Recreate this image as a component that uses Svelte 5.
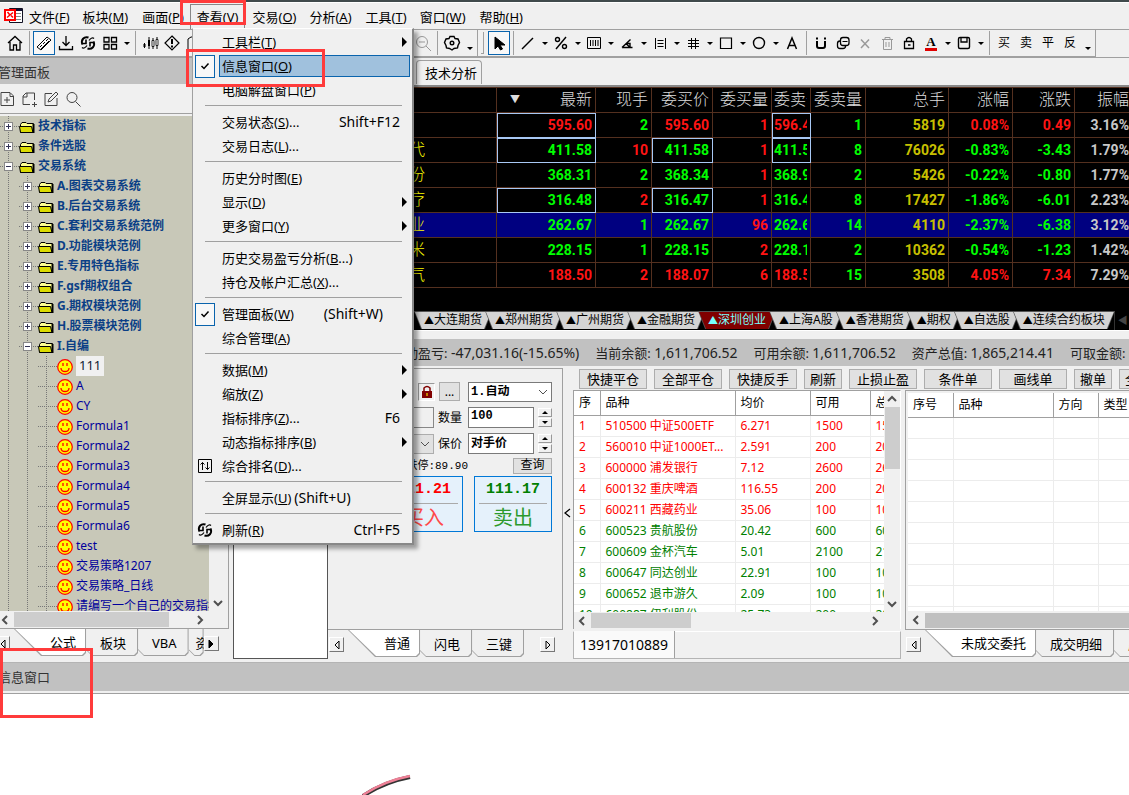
<script>
    const menus = [
        ['文件', 'F'], ['板块', 'M'], ['画面', 'P'], ['查看', 'V'], ['交易', 'O'],
        ['分析', 'A'], ['工具', 'T'], ['窗口', 'W'], ['帮助', 'H'],
    ];

    const viewMenu = [
        { text: '工具栏', key: 'T', sub: true },
        { text: '信息窗口', key: 'O', checked: true, active: true },
        { text: '电脑解盘窗口', key: 'P' },
        null,
        { text: '交易状态', key: 'S', tail: '...', hint: 'Shift+F12' },
        { text: '交易日志', key: 'L', tail: '...' },
        null,
        { text: '历史分时图', key: 'E' },
        { text: '显示', key: 'D', sub: true },
        { text: '更多窗口', key: 'Y', sub: true },
        null,
        { text: '历史交易盈亏分析', key: 'B', inner: '...' },
        { text: '持仓及帐户汇总', key: 'X', tail: '...' },
        null,
        { text: '管理面板', key: 'W', checked: true, hint: '(Shift+W)', near: true },
        { text: '综合管理', key: 'A' },
        null,
        { text: '数据', key: 'M', sub: true },
        { text: '缩放', key: 'Z', sub: true },
        { text: '指标排序', key: 'Z', tail: '...', hint: 'F6' },
        { text: '动态指标排序', key: 'B', sub: true },
        { text: '综合排名', key: 'D', tail: '...', icon: 'sort' },
        null,
        { text: '全屏显示', key: 'U', extra: '(Shift+U)' },
        null,
        { text: '刷新', key: 'R', hint: 'Ctrl+F5', icon: 'refresh' },
    ];

    // 18x18 icons
    const icons = {
        home: '<path d="M2 9 9 2.500 16 9M4 8v8h3.500v-5h3v5H14V8" stroke-width="1.300"/>',
        ruler: '<path d="M2 13 12 3l4 3L6 16zM5 13l2-2M8 10l2-2M11 7l2-2M6 15l8-8"/>',
        download: '<path d="M9 2v9M5.500 8 9 11.500 12.500 8M2.500 12v3.500h13V12" stroke-width="1.300"/>',
        refresh: '<path d="M9.500 3.500C5 2 1.500 6 3.500 10.500M8.500 14.500c4.500 1.500 8-2.500 6-7" stroke-width="2"/><path d="M7 5.500v4H3M11 12.500v-4h4" stroke-width="1.600"/><path d="M10 6.500c2-3 4-3 5-2M8 11.500c-2 3-4 3-5 2" stroke-width="1.300"/>',
        grid: '<path d="M3 3.500h5v4.500H3zM10.500 3.500h5v4.500h-5zM3 10.500h5V15H3zM10.500 10.500h5V15h-5z" stroke-width="1.300"/>',
        candle: '<path d="M3.500 9v5M8 3v12M12 4v11M16 3v12"/><path d="M2.500 10h2v3h-2zM7 6h2v6H7z" fill="currentColor" stroke="none"/><path d="M11 6.500h2v6h-2zM15 5.500h2v6h-2z" fill="#fff" stroke-width=".8"/>',
        alert: '<path d="M9 2 16 9 9 16 2 9z" stroke-width="1.200"/><path d="M9 5v5M9 11.500v2" stroke-width="2"/>',
        page: '<path d="M3 5l3-2h8v13H3z"/>',
        zoomout: '<circle cx="8" cy="8" r="5.500"/><path d="M5 8h6M12 12l5 5"/>',
        gear: '<path d="M7 2.500h4l1 2 3 .5 1.500 3.500-1.500 3-.5 2.500-3.500.500-2 1.500-2.500-1.500-3-.5-.5-2.500L1.500 8.500 3 5l3-.5z" stroke-width="1.400"/><circle cx="9" cy="9" r="1.800" stroke-width="1.400"/>',
        cursor: '<path d="M5 3v12l3-3 2.500 4 2-1-2.500-4h5z" fill="currentColor"/>',
        line: '<path d="M3 15 14 4" stroke-width="1.500"/>',
        percent: '<path d="M4 15 14 3" stroke-width="1.400"/><circle cx="5.500" cy="5.500" r="2" stroke-width="1.400"/><circle cx="12.500" cy="12.500" r="2" stroke-width="1.400"/>',
        bars: '<path d="M2.500 3.500h13v11h-13zM5.500 6v6M8 6v6M10.500 6v6M13 6v6"/>',
        angle: '<path d="M4 13.500h10.500M4 13.500 12.500 5.500M8 9.500l4 4M9 9.500h3v4" stroke-width="1.400"/>',
        lines: '<path d="M4.500 4v11M14.500 4v11M6.500 6.500h6M6.500 9.500h6M6.500 12.500h6"/>',
        hash: '<path d="M7.500 4v11M11.500 4v11M4 6.500h11M4 9.500h11M4 12.500h11"/>',
        square: '<path d="M3.500 4h11v10.500h-11z" stroke-width="1.200"/>',
        circle: '<circle cx="9" cy="9" r="5.500" stroke-width="1.400"/>',
        letter: '<path d="M4.500 15 9 4l4.500 11M6 11.500h6" stroke-width="1.500"/>',
        magnet: '<path d="M5 7v5q0 2 2 2h4q2 0 2-2V7M5 3.500v2M13 3.500v2" stroke-width="2"/>',
        copy: '<rect x="3.500" y="7" width="8" height="7.500" rx="2.500" stroke-width="1.300"/><rect x="6.500" y="3.500" width="8.500" height="8" rx="2.500" fill="#f0f0f0" stroke-width="1.300"/><path d="M8.500 7.500h5"/>',
        close: '<path d="M5 5.500 13 14M13 5.500 5 14" stroke-width="1.500"/>',
        trash: '<path d="M4 5.500h11M7 5V3.500h5V5M5.500 6v9.500h8V6M8 8v5M11 8v5"/>',
        lock: '<path d="M4.500 7.500h9v7h-9zM6.500 7V5q2.500-3 5 0v2M8 11h2.500" stroke-width="1.300"/>',
        save: '<rect x="3.500" y="3.500" width="11" height="11" rx="1.500" stroke-width="1.400"/><path d="M6 3.500V8h6V3.500" stroke-width="1.300"/>',
        sort: '<path d="M2.500 2.500h13v13h-13zM6.500 13V5.500M4.500 7.500l2-2 2 2M11.500 5v7.500M9.500 10.500l2 2 2-2"/>',
        newfile: '<path d="M3 2.500h9l3.500 3.500v9.500H3zM12 3v3.500h3M6 10h6M9 7v6"/>',
        addfile: '<path d="M10 14.500H3V6l3-3h8.500v7M7 3v4H3M12 14.500h5M14.500 12v5"/>',
        edit: '<path d="M10 3.500H3v12h12V8M6 12l1-3 7-7 2 2-7 7z"/>',
        search: '<circle cx="8" cy="7.500" r="5"/><path d="m11.500 11.500 5 5"/>',
    };

    const drawTools = ['line', 'percent', 'bars', 'angle', 'lines', 'hash', 'square', 'circle'];
    const orderTools = ['买', '卖', '平', '反'];

    const tree = [
        { depth: 0, label: '技术指标' },
        { depth: 0, label: '条件选股' },
        { depth: 0, label: '交易系统', open: true },
        { depth: 1, label: 'A.图表交易系统' },
        { depth: 1, label: 'B.后台交易系统' },
        { depth: 1, label: 'C.套利交易系统范例' },
        { depth: 1, label: 'D.功能模块范例' },
        { depth: 1, label: 'E.专用特色指标' },
        { depth: 1, label: 'F.gsf期权组合' },
        { depth: 1, label: 'G.期权模块范例' },
        { depth: 1, label: 'H.股票模块范例' },
        { depth: 1, label: 'I.自编', open: true },
        ...['111', 'A', 'CY', 'Formula1', 'Formula2', 'Formula3', 'Formula4', 'Formula5', 'Formula6',
            'test', '交易策略1207', '交易策略_日线', '请编写一个自己的交易指标'].map((label) => ({ depth: 2, label })),
    ];

    const quoteHead = ['现手', '委买价', '委买量', '委卖价', '委卖量', '总手', '涨幅', '涨跌', '振幅'];
    // name, last, vol, bid, bid vol, ask, ask vol, total, change %, change, range; up = red
    const quotes = [
        { up: true, volUp: false, cells: ['', '595.60', '2', '595.60', '1', '596.40', '1', '5819', '0.08%', '0.49', '3.16%'], boxed: [1, 5] },
        { up: false, volUp: true, cells: ['代', '411.58', '10', '411.58', '1', '411.59', '8', '76026', '-0.83%', '-3.43', '1.79%'], boxed: [1, 3, 5] },
        { up: false, volUp: false, cells: ['份', '368.31', '2', '368.34', '1', '368.90', '2', '5426', '-0.22%', '-0.80', '1.77%'], boxed: [] },
        { up: false, volUp: true, cells: ['疗', '316.48', '2', '316.47', '1', '316.48', '8', '17427', '-1.86%', '-6.01', '2.23%'], boxed: [1, 3] },
        { up: false, volUp: false, cells: ['业', '262.67', '1', '262.67', '96', '262.68', '14', '4110', '-2.37%', '-6.38', '3.12%'], boxed: [], current: true },
        { up: false, volUp: false, cells: ['米', '228.15', '1', '228.15', '2', '228.17', '2', '10362', '-0.54%', '-1.23', '1.42%'], boxed: [] },
        { up: true, volUp: true, cells: ['气', '188.50', '2', '188.07', '6', '188.50', '15', '3508', '4.05%', '7.34', '7.29%'], boxed: [] },
    ];

    function tone(row, i) {
        if (i === 0) return 'name';
        if (i === 2) return row.volUp ? 'red' : 'green';
        if (i === 4) return 'red';
        if (i === 6) return 'green';
        if (i === 7) return 'total';
        if (i === 10) return 'plain';
        return row.up ? 'red' : 'green';
    }

    const markets = ['大连期货', '郑州期货', '广州期货', '金融期货', '深圳创业', '上海A股', '香港期货', '期权', '自选股', '连续合约板块'];

    const funds = [
        ['浮动盈亏', '-47,031.16(-15.65%)'],
        ['当前余额', '1,611,706.52'],
        ['可用余额', '1,611,706.52'],
        ['资产总值', '1,865,214.41'],
        ['可取金额', '0.00'],
    ];

    const actions = ['快捷平仓', '全部平仓', '快捷反手', '刷新', '止损止盈', '条件单', '画线单', '撤单', '全撤'];

    const positions = [
        ['510500 中证500ETF', '6.271', '1500', '1500'],
        ['560010 中证1000ET...', '2.591', '200', '200'],
        ['600000 浦发银行', '7.12', '2600', '2600'],
        ['600132 重庆啤酒', '116.55', '200', '200'],
        ['600211 西藏药业', '35.06', '100', '100'],
        ['600523 贵航股份', '20.42', '600', '600'],
        ['600609 金杯汽车', '5.01', '2100', '2100'],
        ['600647 同达创业', '22.91', '100', '100'],
        ['600652 退市游久', '2.09', '100', '100'],
        ['600887 伊利股份', '25.73', '200', '200'],
    ];

    let side = $state('公式');
    let quantity = $state('100');
    let priceMode = $state('对手价');
</script>

{#snippet icon(name)}
    <svg class="icon" viewBox="0 0 18 18" width="18" height="18" aria-hidden="true">{@html icons[name]}</svg>
{/snippet}

{#snippet tool(name, extra)}
    <button class="tool {extra}" aria-label={name}>{@render icon(name)}</button>
{/snippet}

{#snippet drop()}
    <button class="drop" aria-label="more"><i class="caret"></i></button>
{/snippet}

{#snippet chevron(dir)}
    <svg class="chevron {dir}" viewBox="0 0 10 10" width="10" height="10" aria-hidden="true"><path d="M1 3l4 4 4-4" /></svg>
{/snippet}

{#snippet pager(dir, filled)}
    <button class="pager" aria-label={dir}>
        <svg viewBox="0 0 8 10" width="8" height="10"><path class:filled d={dir === 'left' ? 'M6 1v8L2 5z' : 'M2 1v8l4-4z'} /></svg>
    </button>
{/snippet}

<div class="app">
    <header>
        <nav class="menubar">
            <svg class="logo" viewBox="0 0 20 20" width="20" height="20" aria-hidden="true">
                <path d="M6.500 2.500h13v14h-13z" fill="#fff" stroke="#112" />
                <path d="M6 3h13v2H6z" fill="#113" />
                <path d="M13 7.500h5M13 10.500h5M13 13.500h5" stroke="#888" />
                <path d="M2 4h10v10H2z" fill="#fff" stroke="#f00" stroke-width="2" />
                <path d="M4 11.500 10 6.500M4.500 6l2 2.500M8 9.500l2 2" stroke="#f00" stroke-width="1.500" />
            </svg>
            {#each menus as [text, key]}
                <button class="menu" class:open={key === 'V'}>{text}(<u>{key}</u>)</button>
            {/each}
        </nav>

        <div class="toolbars">
            <div class="toolbar first">
                {@render tool('home')}
                <i class="sep"></i>
                {@render tool('ruler', 'on')}
                {@render tool('download')}
                {@render tool('refresh')}
                {@render tool('grid')}
                {@render drop()}
                <i class="sep"></i>
                {@render tool('candle')}
                {@render tool('alert')}
                {@render tool('page')}
                {@render tool('zoomout', 'dim last')}
                <i class="sep"></i>
                {@render tool('gear')}
                <button class="overflow" aria-label="overflow"><i class="caret"></i></button>
            </div>
            <div class="toolbar second">
                <i class="grip"></i>
                {@render tool('cursor', 'on')}
                <i class="sep"></i>
                {#each drawTools as name}
                    {@render tool(name)}
                    {@render drop()}
                {/each}
                {@render tool('letter')}
                <i class="sep"></i>
                {@render tool('magnet')}
                {@render tool('copy')}
                {@render tool('close', 'dim')}
                {@render tool('trash', 'dim')}
                {@render tool('lock')}
                <button class="tool color">A</button>
                {@render drop()}
                {@render tool('save')}
                {@render drop()}
                <i class="sep"></i>
                {#each orderTools as text}
                    <button class="tool">{text}</button>
                {/each}
                <button class="overflow" aria-label="overflow"><i class="caret"></i></button>
            </div>
        </div>
    </header>

    <main>
        <aside>
            <h2 class="title">管理面板</h2>
            <div class="side-tools">
                {@render tool('newfile')}
                {@render tool('addfile')}
                {@render tool('edit')}
                {@render tool('search')}
            </div>
            <div class="tree-box">
                <ul class="tree">
                    {#each tree as node}
                        <li class:leaf={node.depth === 2}>
                            {#each Array(node.depth) as _}
                                <i class="guide"></i>
                            {/each}
                            <i class="guide branch">
                                {#if node.depth < 2}
                                    <b class="toggle" class:minus={node.open}></b>
                                {/if}
                            </i>
                            {#if node.depth < 2}
                                <svg class="folder" viewBox="0 0 16 14" width="16" height="14" aria-hidden="true">
                                    <path d="M1.500 12.500V4.500l1.500-2h4l1 1h6.500v9z" fill="#ffff90" stroke="#000" />
                                    <path d="M.5 6.500h12l1.500 6H1.500z" fill="#dcdc00" stroke="#000" />
                                    <path d="M14.500 4v9" stroke="#000" stroke-width="2" />
                                </svg>
                            {:else}
                                <svg class="smiley" viewBox="0 0 16 16" width="16" height="16" aria-hidden="true">
                                    <circle cx="8" cy="8" r="7.300" fill="#ff0" stroke="#f00" stroke-width="1.200" />
                                    <path d="M6 4v3M10 4v3M4 9q0 3.500 4 3.500T12 9" fill="none" stroke="#f00" stroke-width="1.300" />
                                </svg>
                            {/if}
                            <span class:picked={node.label === '111'}>{node.label}</span>
                        </li>
                    {/each}
                </ul>
                <div class="vscroll">{@render chevron('down')}</div>
            </div>
            <div class="hscroll">
                {@render chevron('left')}
                <i class="thumb wide"></i>
                {@render chevron('right')}
            </div>
            <div class="tabs">
                {@render pager('left')}
                {#each ['公式', '板块', 'VBA'] as name}
                    <button class="tab" class:active={side === name} onclick={() => (side = name)}><span>{name}</span></button>
                {/each}
                <button class="tab cut"><span>资</span></button>
                {@render pager('right', true)}
            </div>
        </aside>

        <section class="desk">
            <div class="chart-tabs"><button>技术分析</button></div>

            <div class="quotes">
                <table>
                    <colgroup>
                        <col class="c-name" /><col class="c-last" /><col class="c-vol" /><col class="c-bid" /><col class="c-bidvol" />
                        <col class="c-ask" /><col class="c-askvol" /><col class="c-total" /><col class="c-pct" /><col class="c-chg" /><col class="c-range" />
                    </colgroup>
                    <thead>
                        <tr>
                            <th></th>
                            <th><div class="sorted"><i>▼</i><span>最新</span></div></th>
                            {#each quoteHead as h, i}
                                <th class:ask={i === 3}><div>{h}</div></th>
                            {/each}
                        </tr>
                    </thead>
                    <tbody>
                        {#each quotes as row}
                            <tr class:current={row.current}>
                                {#each row.cells as cell, i}
                                    <td class={tone(row, i)} class:ask={i === 5} class:boxed={row.boxed.includes(i)}><div>{cell}</div></td>
                                {/each}
                            </tr>
                        {/each}
                    </tbody>
                </table>
                <div class="markets">
                    {#each markets as name}
                        <button class:active={name === '深圳创业'}><span><i>▲</i>{name}</span></button>
                    {/each}
                    <b class="more">◀</b>
                </div>
            </div>

            <div class="funds">
                {#each funds as [label, value]}
                    <span>{label}: <span class="num">{value}</span></span>
                {/each}
            </div>

            <div class="trade">
                <div class="blank"></div>

                <div class="order">
                    <form class="order-form" onsubmit={(e) => e.preventDefault()}>
                        <div class="line">
                            <button class="lock" aria-label="lock">
                                <svg viewBox="0 0 12 14" width="12" height="14"><path d="M3 6V3q3-3 6 0v3" fill="none" stroke="#800000" stroke-width="1.500" /><path d="M1 6h10v7H1z" fill="#800000" /><path d="M5.500 8h1v3h-1z" fill="#ff0" /></svg>
                            </button>
                            <button class="dots">...</button>
                            <div class="combo">
                                <select aria-label="account"><option>1.自动</option></select>
                                {@render chevron('down')}
                            </div>
                        </div>
                        <div class="line">
                            <input class="code" aria-label="code" />
                            <label for="quantity">数量</label>
                            <input id="quantity" class="value" bind:value={quantity} />
                            <div class="spin"><button aria-label="up"><i class="caret up"></i></button><button aria-label="down"><i class="caret"></i></button></div>
                        </div>
                        <div class="line">
                            <div class="combo small">
                                <select aria-label="type"><option></option></select>
                                {@render chevron('down')}
                            </div>
                            <label for="price">保价</label>
                            <input id="price" class="value" bind:value={priceMode} />
                            <div class="spin"><button aria-label="up"><i class="caret up"></i></button><button aria-label="down"><i class="caret"></i></button></div>
                        </div>
                        <div class="line limit">
                            <span>跌停:89.90</span>
                            <button class="query">查询</button>
                        </div>
                        <div class="line deal">
                            <button class="buy"><b>111.21</b><span>买入</span></button>
                            <button class="sell"><b>111.17</b><span>卖出</span></button>
                        </div>
                    </form>
                    <div class="tabs">
                        {@render pager('left')}
                        <button class="tab active"><span>普通</span></button>
                        <button class="tab"><span>闪电</span></button>
                        <button class="tab"><span>三键</span></button>
                        {@render pager('right')}
                    </div>
                </div>

                <div class="splitter">
                    <svg viewBox="0 0 8 10" width="8" height="10" aria-hidden="true"><path d="M6 1 1 5l5 4" fill="none" stroke="#000" stroke-width="1.300" /></svg>
                </div>

                <div class="lists">
                    <div class="actions">
                        {#each actions as name}
                            <button class:short={name.length === 2}>{name}</button>
                        {/each}
                    </div>
                    <div class="panes">
                        <div class="positions">
                            <div class="grid-box">
                                <div class="grid-row">
                                    <div class="clip">
                                        <table class="list">
                                            <colgroup><col class="p-no" /><col class="p-name" /><col class="p-avg" /><col class="p-use" /><col class="p-sum" /></colgroup>
                                            <thead>
                                                <tr><th>序</th><th>品种</th><th>均价</th><th>可用</th><th>总</th></tr>
                                            </thead>
                                            <tbody>
                                                {#each positions as row, i}
                                                    <tr class={i < 5 ? 'gain' : 'loss'}>
                                                        <td>{i + 1}</td>
                                                        {#each row as cell}
                                                            <td>{cell}</td>
                                                        {/each}
                                                    </tr>
                                                {/each}
                                            </tbody>
                                        </table>
                                    </div>
                                    <div class="vscroll full">
                                        {@render chevron('up')}
                                        <i class="thumb"></i>
                                        {@render chevron('down')}
                                    </div>
                                </div>
                                <div class="hscroll">
                                    {@render chevron('left')}
                                    <i class="thumb mid"></i>
                                    {@render chevron('right')}
                                </div>
                            </div>
                            <div class="account"><button>13917010889</button></div>
                        </div>

                        <div class="pending">
                            <div class="grid-box">
                                <div class="clip">
                                    <table class="list">
                                        <colgroup><col class="o-no" /><col class="o-name" /><col class="o-dir" /><col class="o-type" /></colgroup>
                                        <thead>
                                            <tr><th>序号</th><th>品种</th><th>方向</th><th>类型</th></tr>
                                        </thead>
                                        <tbody>
                                            {#each Array(10) as _}
                                                <tr><td></td><td></td><td></td><td></td></tr>
                                            {/each}
                                        </tbody>
                                    </table>
                                </div>
                                <div class="hscroll">
                                    {@render chevron('left')}
                                    <i class="thumb long"></i>
                                </div>
                            </div>
                            <div class="tabs">
                                {@render pager('left')}
                                <button class="tab active"><span>未成交委托</span></button>
                                <button class="tab"><span>成交明细</span></button>
                                <button class="tab"><span>成交</span></button>
                            </div>
                        </div>
                    </div>
                </div>
            </div>
        </section>
    </main>

    <section class="info">
        <h2 class="title">信息窗口</h2>
        <div class="info-body">
            <svg viewBox="0 0 50 22" width="50" height="22" aria-hidden="true">
                <path d="M1 22Q22 8 48 3" fill="none" stroke="#333" stroke-width="4" />
                <path d="M1 21Q22 7 48 2" fill="none" stroke="#ee8096" stroke-width="2.500" />
            </svg>
        </div>
    </section>

    <div class="popup" role="menu">
        {#each viewMenu as item}
            {#if item}
                <button class="item" class:hot={item.active} role="menuitem">
                    <span class="mark" class:checked={item.checked}>
                        {#if item.checked}
                            <svg viewBox="0 0 10 10" width="10" height="10"><path d="M1.500 5 4 7.500l4.500-5" fill="none" stroke="#000" stroke-width="1.500" /></svg>
                        {:else if item.icon}
                            {@render icon(item.icon)}
                        {/if}
                    </span>
                    <span class="text">
                        <span>{item.text}(<u>{item.key}</u>{item.inner ?? ''}){item.tail ?? ''}</span>
                        {#if item.extra}<span class="extra">{item.extra}</span>{/if}
                        {#if item.hint}<span class="hint" class:near={item.near}>{item.hint}</span>{/if}
                        {#if item.sub}<i class="arrow"></i>{/if}
                    </span>
                </button>
            {:else}
                <hr />
            {/if}
        {/each}
    </div>

    <div class="frame frame-menu"></div>
    <div class="frame frame-item"></div>
    <div class="frame frame-info"></div>
</div>

<style>
    :global(body) {
        margin: 0;
        overflow: hidden;
    }
    .app {
        position: relative;
        display: flex;
        flex-direction: column;
        height: 100vh;
        overflow: hidden;
        background: #f0f0f0;
        color: #000;
        font: 13px/18px "Noto Sans", "Noto Sans CJK SC", sans-serif;
    }
    .app * {
        box-sizing: border-box;
    }
    button, input, select {
        font: inherit;
        color: inherit;
        margin: 0;
        padding: 0;
        border: 0;
        background: none;
        border-radius: 0;
        white-space: nowrap;
    }
    i {
        font-style: normal;
    }
    svg {
        display: block;
        flex: none;
    }
    .icon {
        fill: none;
        stroke: currentColor;
    }

    /* menu bar and toolbars */
    header {
        border-top: 2px solid #404a4c;
        flex: none;
    }
    .menubar {
        display: flex;
        height: 27px;
        padding-left: 3px;
        border-top: 1px solid #fff;
        align-items: center;
    }
    .logo {
        margin-right: -1px;
    }
    .menu {
        height: 25px;
        padding: 0 6px;
        border: 1px solid transparent;
        border-width: 1px 0 0 1px;
    }
    .menu:nth-of-type(even) {
        border-right-width: 1px;
    }
    .menu.open {
        border-color: #888;
    }
    .toolbars {
        display: flex;
        height: 29px;
        border-top: 1px solid #a0a0a0;
        border-bottom: 1px solid #a0a0a0;
    }
    .toolbar {
        display: flex;
        align-items: center;
        border-right: 1px solid #a0a0a0;
        border-bottom: 1px solid #a0a0a0;
    }
    .first {
        flex: none;
        width: 478px;
        padding-left: 4px;
    }
    .tool {
        display: flex;
        align-items: center;
        justify-content: center;
        flex: none;
        width: 22px;
        height: 24px;
        font-size: 12px;
    }
    .tool.on {
        border: 1px solid #0a64ad;
        background: #f8f8f8;
    }
    .tool.dim {
        color: #999;
    }
    .tool.last {
        margin-left: auto;
    }
    .color {
        height: 16px;
        border-bottom: 3px solid #e00000;
        width: 12px;
        margin: 0 5px;
        font: bold 13px/13px "Liberation Serif", serif;
    }
    .drop {
        width: 11px;
        height: 24px;
        display: flex;
        align-items: center;
        justify-content: center;
    }
    .caret {
        border: 3px solid transparent;
        border-top-color: #000;
        border-bottom: 0;
    }
    .caret.up {
        border-bottom: 3px solid #000;
        border-top: 0;
    }
    .overflow {
        display: flex;
        width: 14px;
        height: 24px;
        align-items: flex-end;
        justify-content: center;
        padding-bottom: 5px;
    }
    .sep {
        width: 1px;
        height: 24px;
        margin: 0 3px;
        background: #a0a0a0;
    }
    .grip {
        width: 3px;
        height: 22px;
        margin: 0 4px 0 3px;
        border-right: 1px solid #a0a0a0;
        border-bottom: 1px solid #a0a0a0;
    }

    main {
        display: flex;
        flex: none;
        border-bottom: 1px solid #b4b4b4;
    }
    .title {
        margin: 0;
        height: 26px;
        background: #c1c1c1;
        color: #333;
        font-size: 13px;
        font-weight: normal;
        line-height: 28px;
        text-indent: -2px;
    }

    /* left panel */
    aside {
        width: 229px;
        flex: none;
        margin-right: 4px;
    }
    .side-tools {
        display: flex;
        height: 30px;
        margin-left: -4px;
        align-items: center;
        color: #444;
        border-bottom: 1px solid #a0a0a0;
    }
    .tree-box {
        display: flex;
        height: 497px;
        border-top: 2px solid #f0f0f0;
        border-right: 1px solid #a0a0a0;
    }
    .tree {
        flex: 1;
        min-width: 0;
        overflow: hidden;
        margin: 0;
        padding: 0;
        list-style: none;
        background: #c8c8b8;
        color: #0b3f86;
        font-size: 12px;
        font-weight: bold;
    }
    .tree li {
        display: flex;
        height: 20px;
        align-items: center;
        white-space: nowrap;
    }
    .tree li.leaf {
        color: #00009c;
        font-weight: normal;
    }
    .tree span {
        line-height: 19px;
        padding: 0 3px 1px;
    }
    .tree svg {
        margin-top: 2px;
    }
    .tree .picked {
        margin-left: 3px;
        background: #f0f0f0;
        color: #123;
        font-size: 13px;
    }
    .guide {
        display: flex;
        align-items: center;
        width: 19px;
        height: 20px;
        flex: none;
        padding-left: 4px;
        background: linear-gradient(#777 50%, transparent 50%) 8px 0 / 1px 2px repeat-y;
    }
    .branch {
        background: linear-gradient(#777 50%, transparent 50%) 8px 0 / 1px 2px repeat-y, linear-gradient(90deg, #777 50%, transparent 50%) 8px 10px / 2px 1px;
        background-repeat: repeat-y, repeat-x;
    }
    .toggle {
        width: 9px;
        height: 9px;
        border: 1px solid #888;
        background:
            linear-gradient(#335, #335) center / 5px 1px no-repeat,
            linear-gradient(#335, #335) center / 1px 5px no-repeat,
            #fff;
    }
    .toggle.minus {
        background: linear-gradient(#335, #335) center / 5px 1px no-repeat, #fff;
    }
    .vscroll {
        display: flex;
        flex-direction: column;
        justify-content: flex-end;
        align-items: center;
        width: 19px;
        padding: 3px 2px 3px 0;
        background: #f0f0f0;
    }
    .vscroll.full {
        width: 16px;
        padding: 3px 0;
        justify-content: flex-start;
    }
    .vscroll.full .thumb {
        width: 15px;
        height: 62px;
        margin: 3px 0 auto;
    }
    .hscroll {
        display: flex;
        align-items: center;
        height: 17px;
        background: #f0f0f0;
    }
    .thumb {
        height: 15px;
        background: #cdcdcd;
    }
    .wide {
        width: 155px;
        margin: 0 26px 0 4px;
    }
    .mid {
        width: 100px;
        margin: 0 auto 0 4px;
    }
    .long {
        flex: 1;
        margin-left: 4px;
        background: #c0c0c0;
    }
    .chevron path {
        fill: none;
        stroke: #505050;
        stroke-width: 2;
    }
    .chevron.left {
        transform: rotate(90deg);
    }
    .chevron.right {
        transform: rotate(-90deg);
    }
    .chevron.up {
        transform: rotate(180deg);
    }
    aside .hscroll {
        border-right: 1px solid #a0a0a0;
    }

    /* bottom tabs with cut corners */
    .tabs {
        display: flex;
        height: 34px;
        border-top: 1px solid #a0a0a0;
        overflow: hidden;
    }
    .tab {
        position: relative;
        flex: none;
        height: 27px;
        padding: 0 12px 0 14px;
        background: #a0a0a0;
        clip-path: polygon(0 0, 100% 0, 100% calc(100% - 3px), calc(100% - 3px) 100%, 6px 100%, 0 calc(100% - 6px));
    }
    .tab::before {
        content: "";
        position: absolute;
        inset: 0 1px 1px 0;
        background: #f0f0f0;
        clip-path: polygon(0 0, 100% 0, 100% calc(100% - 3px), calc(100% - 3px) 100%, 6px 100%, 0 calc(100% - 6px));
    }
    .tab.active {
        margin-top: -1px;
        height: 28px;
        padding: 0 10px 0 37px;
        clip-path: polygon(0 0, 100% 0, 100% calc(100% - 3px), calc(100% - 3px) 100%, 28px 100%);
    }
    .tab.active::before {
        inset: 0 1px 1px 1px;
        background: #fff;
        clip-path: polygon(0 0, 100% 0, 100% calc(100% - 3px), calc(100% - 3px) 100%, 28px 100%);
    }
    .tab span {
        position: relative;
    }
    .tab.cut {
        width: 15px;
        padding: 0 0 0 7px;
        overflow: hidden;
    }
    .pager {
        display: flex;
        flex: none;
        align-items: center;
        justify-content: center;
        width: 15px;
        height: 15px;
        margin: 7px 0 0;
        border: 1px solid #fff;
        border-right-color: #777;
        border-bottom-color: #777;
    }
    .pager path {
        fill: none;
        stroke: #000;
    }
    .pager path.filled {
        fill: #000;
    }
    aside .pager:first-child {
        margin-left: -5px;
        margin-right: 3px;
    }

    /* quotes */
    .desk {
        flex: 1;
        min-width: 0;
    }
    .chart-tabs {
        display: flex;
        align-items: flex-end;
        height: 29px;
        padding: 0 0 1px 183px;
        border-bottom: 2px solid #888;
    }
    .chart-tabs button {
        height: 24px;
        padding: 0 4px 0 8px;
        border: 1px solid #a0a0a0;
        border-bottom: 0;
        border-radius: 4px 4px 0 0;
    }
    .quotes {
        overflow: hidden;
        background: #000;
        border-bottom: 1px solid #fff;
    }
    table {
        table-layout: fixed;
        border-collapse: collapse;
    }
    .quotes table {
        width: 899px;
        font: bold 14px/24px Roboto, "Noto Sans CJK SC", sans-serif;
    }
    .c-name { width: 263px; }
    .c-last { width: 99px; }
    .c-vol { width: 56px; }
    .c-bid { width: 61px; }
    .c-bidvol { width: 59px; }
    .c-ask { width: 39px; }
    .c-askvol { width: 55px; }
    .c-total { width: 83px; }
    .c-pct { width: 64px; }
    .c-chg { width: 62px; }
    .c-range { width: 58px; }
    .quotes th, .quotes td {
        height: 25px;
        padding: 0 3px;
        border: 1px solid #54301f;
        text-align: right;
        white-space: nowrap;
    }
    .quotes th {
        color: #ddd;
        font-size: 16px;
        font-weight: 300;
    }
    .quotes th div, .quotes td div {
        height: 24px;
        overflow: hidden;
    }
    .quotes .ask {
        text-align: left;
        padding-left: 2px;
    }
    .sorted {
        display: flex;
        justify-content: space-between;
        padding-left: 10px;
    }
    .sorted i {
        font-size: 10px;
    }
    .current {
        background: #000080;
    }
    .quotes .name {
        color: #ff0;
        font-size: 16px;
        font-weight: 300;
        text-align: left;
        padding-left: 175px;
    }
    .red { color: #ff1414; }
    .green { color: #00ff00; }
    .total { color: #c8c000; }
    .plain { color: #c8c8c8; }
    .quotes td.boxed {
        outline: 1px solid #a8c8f4;
        outline-offset: -1px;
    }
    .markets {
        display: flex;
        height: 42px;
        padding: 23px 0 0 181px;
    }
    .markets button {
        position: relative;
        flex: none;
        height: 18px;
        padding: 0 10px;
        margin-right: -7px;
        background: #555;
        font-size: 12px;
        line-height: 18px;
        clip-path: polygon(0 0, 100% 0, calc(100% - 7px) 100%, 7px 100%);
    }
    .markets button::before {
        content: "";
        position: absolute;
        inset: 1px 1px 0 1px;
        background: #d4d4d4;
        clip-path: polygon(0 0, 100% 0, calc(100% - 7px) 100%, 7px 100%);
    }
    .markets .active {
        color: #7ff;
    }
    .markets .active::before {
        background: #800000;
    }
    .markets span {
        position: relative;
    }
    .markets i {
        display: inline-block;
        width: 10px;
        font-size: 10px;
    }
    .more {
        margin-left: 6px;
        padding-left: 3px;
        border-left: 1px solid #333;
        color: #444;
        font-size: 10px;
    }
    .funds {
        display: flex;
        gap: 16px;
        height: 27px;
        margin-top: 8px;
        padding-left: 159px;
        overflow: hidden;
        background: #c1c1c1;
        color: #222;
        line-height: 27px;
        white-space: nowrap;
    }
    .num {
        font-size: 14px;
    }

    /* order entry */
    .trade {
        display: flex;
        height: 296px;
    }
    .blank {
        width: 95px;
        margin-bottom: 3px;
        flex: none;
        background: #fff;
        border: 1px solid #555;
    }
    .order {
        width: 235px;
        flex: none;
    }
    .order-form {
        display: flex;
        flex-direction: column;
        gap: 5px;
        height: 261px;
        margin-top: 2px;
        padding: 12px 10px 0 0;
        border: 1px solid #a0a0a0;
        border-width: 1px 1px 0 0;
        font-size: 12px;
    }
    .line {
        display: flex;
        justify-content: flex-end;
        align-items: center;
        gap: 4px;
        height: 21px;
    }
    .lock {
        display: flex;
        align-items: center;
        justify-content: center;
        width: 17px;
        height: 18px;
        border: 1px solid #999;
        border-right-color: #fff;
        border-bottom-color: #fff;
    }
    .dots, .query, .actions button {
        border: 1px solid #adadad;
        background: #e1e1e1;
    }
    .dots {
        width: 21px;
        height: 19px;
        line-height: 14px;
    }
    .combo {
        position: relative;
        width: 84px;
        height: 20px;
        margin-left: 4px;
    }
    .combo select {
        appearance: none;
        width: 100%;
        height: 100%;
        padding-left: 2px;
        border: 1px solid #7a7a7a;
        background: #fff;
        font: bold 12px "Liberation Mono", "Noto Sans CJK SC", monospace;
    }
    .combo .chevron {
        position: absolute;
        right: 4px;
        top: 5px;
    }
    .combo .chevron path {
        stroke-width: 1;
    }
    .combo.small {
        width: 50px;
        margin: 0;
    }
    .combo.small select {
        background: #e1e1e1;
        border-color: #adadad;
    }
    .code {
        width: 50px;
        height: 21px;
        border: 1px solid #888;
    }
    .value {
        width: 66px;
        height: 21px;
        margin-left: 2px;
        padding: 0 0 3px 2px;
        border: 1px solid #7a7a7a;
        background: #fff;
        font: bold 12px "Liberation Mono", "Noto Sans CJK SC", monospace;
    }
    .spin {
        display: flex;
        flex-direction: column;
        gap: 1px;
    }
    .spin button {
        display: flex;
        align-items: center;
        justify-content: center;
        width: 14px;
        height: 9px;
        border: 1px solid #fff;
        border-right-color: #999;
        border-bottom-color: #999;
    }
    .limit {
        height: 15px;
        gap: 45px;
        margin-top: -1px;
        font-family: "Liberation Mono", "Noto Sans CJK SC", monospace;
        font-size: 11px;
    }
    .query {
        width: 39px;
        height: 16px;
        line-height: 12px;
        font-size: 12px;
    }
    .deal {
        height: 56px;
        gap: 11px;
        margin-top: -2px;
    }
    .deal button {
        width: 78px;
        height: 56px;
        padding: 0 4px;
        border: 1px solid #0078d7;
        background: #e5f1fb;
        color: #2c9a2c;
    }
    .deal b, .deal span {
        display: block;
    }
    .deal b {
        height: 27px;
        border-bottom: 1px solid #aaa;
        color: #008000;
        font: bold 15px/26px "Liberation Mono", monospace;
    }
    .deal span {
        font-size: 20px;
        line-height: 27px;
    }
    .deal .buy {
        color: #ff4a4a;
    }
    .deal .buy b {
        color: #f00;
    }
    .order .pager:first-child {
        margin: 7px 3px 0 1px;
    }
    .order .pager:last-child {
        margin-left: 16px;
    }
    .splitter {
        display: flex;
        justify-content: center;
        width: 10px;
        padding-top: 142px;
    }

    /* positions and pending orders */
    .lists {
        display: flex;
        flex-direction: column;
        flex: 1;
        min-width: 0;
    }
    .actions {
        display: flex;
        gap: 7px;
        padding: 3px 0 1px 6px;
        overflow: hidden;
    }
    .actions button {
        flex: none;
        width: 68px;
        height: 20px;
        line-height: 16px;
    }
    .actions .short {
        width: 38px;
    }
    .panes {
        display: flex;
        gap: 4px;
        flex: 1;
        min-height: 0;
    }
    .positions {
        flex: none;
        width: 328px;
    }
    .pending {
        flex: 1;
        min-width: 0;
    }
    .grid-box {
        height: 239px;
        border: 1px solid #a0a0a0;
        border-width: 1px 0 0 1px;
    }
    .grid-row {
        display: flex;
        height: 221px;
    }
    .clip {
        overflow: hidden;
        background: #fff;
    }
    .grid-row .clip {
        flex: 1;
    }
    .list {
        width: 327px;
        font-size: 12px;
        line-height: 20px;
    }
    .list th, .list td {
        height: 21px;
        padding: 0 0 0 5px;
        overflow: hidden;
        text-align: left;
        font-weight: normal;
        white-space: nowrap;
        border-right: 1px solid #ececec;
        border-bottom: 1px solid #ececec;
    }
    .list th {
        height: 24px;
        border-right-color: #a0a0a0;
        border-bottom-color: #a0a0a0;
    }
    .p-no { width: 26px; }
    .p-name { width: 135px; }
    .p-avg { width: 75px; }
    .p-use { width: 60px; }
    .p-sum { width: 31px; }
    .gain { color: #f00; }
    .loss { color: #008000; }
    .positions .grid-box {
        border-right: 1px solid #fff;
    }
    .positions .hscroll {
        padding: 0 20px 0 3px;
    }
    .account {
        display: flex;
        height: 28px;
        margin-top: 2px;
        border: 1px solid #b4b4b4;
        border-top-color: #fff;
    }
    .account button {
        width: 101px;
        margin-top: -1px;
        background: #fafafa;
        border-right: 1px solid #a0a0a0;
        font-size: 14px;
    }
    .pending .clip {
        height: 220px;
        margin-left: 2px;
        border-top: 2px solid #f0f0f0;
    }
    .o-no { width: 45px; }
    .o-name { width: 100px; }
    .o-dir { width: 45px; }
    .o-type { width: 137px; }
    .pending .hscroll {
        padding-left: 5px;
        height: 18px;
    }
    .pending .pager {
        margin: 7px 3px 0 1px;
    }

    /* info window */
    .info {
        display: flex;
        flex-direction: column;
        flex: 1;
        min-height: 0;
    }
    .info .title {
        height: 28px;
        flex: none;
    }
    .info-body {
        flex: 1;
        margin-top: 2px;
        padding: 80px 0 0 362px;
        overflow: hidden;
        border-top: 1px solid #a0a0a0;
        background: #fff;
    }

    /* drop-down menu */
    .popup {
        position: absolute;
        left: 192px;
        top: 28px;
        width: 222px;
        padding: 1px 2px 1px 1px;
        border: 1px solid #a0a0a0;
        border-top-color: #fff;
        border-right: 2px solid #888;
        border-bottom: 2px solid #888;
        background: #f0f0f0;
        box-shadow: 4px 4px 4px rgba(0, 0, 0, 0.35);
    }
    .item {
        display: flex;
        width: 100%;
        height: 24px;
        align-items: center;
        text-align: left;
    }
    .mark {
        display: flex;
        align-items: center;
        justify-content: center;
        width: 20px;
        height: 23px;
        margin: 0 4px 0 1px;
    }
    .mark.checked {
        border: 1px solid #0a64ad;
        background: #f8f8f8;
    }
    .text {
        display: flex;
        flex: 1;
        align-items: center;
        height: 22px;
        padding-left: 2px;
        border: 1px solid transparent;
        white-space: nowrap;
    }
    .hot .text {
        border-color: #0a64ad;
        background: #a0c1dd;
    }
    .hint, .extra {
        font-size: 14px;
    }
    .extra {
        margin-left: 3px;
    }
    .hint {
        margin-left: auto;
        margin-right: 9px;
    }
    .hint.near {
        margin-right: 26px;
    }
    .arrow {
        margin-left: auto;
        margin-right: 2px;
        border: 5px solid transparent;
        border-left-color: #000;
        border-right: 0;
    }
    hr {
        height: 1px;
        margin: 3px 8px 4px 11px;
        border: 0;
        background: #a0a0a0;
    }

    /* highlight frames over the window */
    .frame {
        position: absolute;
        border: 3px solid #ff3b3b;
        pointer-events: none;
    }
    .frame-menu {
        left: 180px;
        top: 0;
        width: 66px;
        height: 25px;
    }
    .frame-item {
        left: 186px;
        top: 49px;
        width: 139px;
        height: 38px;
    }
    .frame-info {
        left: 0;
        top: 648px;
        width: 93px;
        height: 70px;
    }
</style>
